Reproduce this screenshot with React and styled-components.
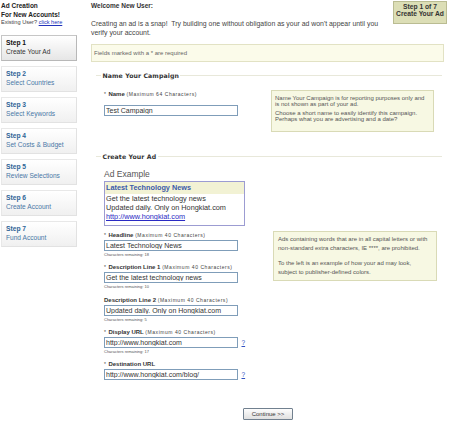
import React from "react";
import styled, { createGlobalStyle } from "styled-components";

const GlobalStyle = createGlobalStyle`
  html, body { margin: 0; padding: 0; background: #fff; }
  body { font-family: "Liberation Sans", Arial, sans-serif; color: #333; }
`;

const Page = styled.div`
  display: flex;
  align-items: flex-start;
  width: 450px;
  padding-left: 1px;
  box-sizing: border-box;
`;

const Sidebar = styled.aside`
  width: 76px;
  flex-shrink: 0;
  padding-top: 0.5px;
`;

const SideTitle = styled.div`
  font-weight: bold;
  font-size: 6.5px;
  line-height: 9px;
  color: #222;
`;

const SideNote = styled.div`
  font-size: 5.6px;
  line-height: 7.5px;
  color: #444;
  a { color: #2233bb; text-decoration: underline; }
`;

const StepList = styled.nav`
  display: flex;
  flex-direction: column;
  gap: 5px;
  margin-top: 9px;
`;

const StepCard = styled.div`
  height: 26px;
  box-sizing: border-box;
  padding: 2px 4px 0;
  border: 1px solid ${(p) => (p.$active ? "#c6c6c6" : "#e8e8e8")};
  border-right-color: ${(p) => (p.$active ? "#b8b8b8" : "#e2e2e2")};
  border-bottom-color: ${(p) => (p.$active ? "#b8b8b8" : "#e2e2e2")};
  background: linear-gradient(#ffffff, ${(p) => (p.$active ? "#e6e6e6" : "#f0f0f0")});
`;

const StepNum = styled.div`
  font-weight: bold;
  font-size: 6.7px;
  line-height: 9px;
  color: ${(p) => (p.$active ? "#111" : "#2f6496")};
`;

const StepName = styled.div`
  font-size: 6.6px;
  line-height: 10px;
  color: ${(p) => (p.$active ? "#333" : "#4a78a6")};
  white-space: nowrap;
`;

const Main = styled.main`
  width: 356px;
  margin-left: 14px;
`;

const Header = styled.header`
  display: flex;
  justify-content: space-between;
  align-items: flex-start;
`;

const Intro = styled.div`
  flex: 1;
  padding-top: 1px;
`;

const Welcome = styled.div`
  font-weight: bold;
  font-size: 6.5px;
  line-height: 9px;
  color: #333;
`;

const IntroText = styled.p`
  margin: 9px 0 0;
  font-size: 6.9px;
  line-height: 9px;
  color: #444;
  white-space: pre;
`;

const StepBadge = styled.div`
  width: 54px;
  height: 23px;
  box-sizing: border-box;
  margin-top: 1px;
  padding-top: 0.5px;
  background: #dcdeb6;
  border: 1px solid #babc92;
  text-align: center;
  font-weight: bold;
  font-size: 6.7px;
  line-height: 7.8px;
  color: #333;
`;

const Required = styled.div`
  margin: 7px 3px 0 0;
  height: 18px;
  box-sizing: border-box;
  padding-left: 2px;
  background: #fbfbea;
  border: 1px solid #e2e2c4;
  font-size: 6px;
  line-height: 16px;
  color: #666;
`;

const Section = styled.section`
  margin-top: ${(p) => p.$gap}px;
`;

const SectionTitle = styled.h2`
  margin: 0 5px 0 0;
  padding-left: 5px;
  display: flex;
  align-items: center;
  gap: 1.5px;
  height: 8px;
  font-family: "DejaVu Sans", Verdana, sans-serif;
  font-weight: bold;
  font-size: 6.2px;
  letter-spacing: 0.1px;
  color: #333;
  white-space: nowrap;
  &::before {
    content: "";
    width: 5px;
    border-top: 1px solid #e8e8da;
  }
  &::after {
    content: "";
    flex: 1;
    border-top: 1px solid #e8e8da;
  }
`;

const SectionBody = styled.div`
  padding-left: 13px;
`;

const Row = styled.div`
  display: flex;
  align-items: flex-start;
  margin-top: ${(p) => p.$gap}px;
`;

const FieldColumn = styled.div`
  width: ${(p) => p.$w}px;
  flex-shrink: 0;
`;

const FieldGroup = styled.div`
  & + & { margin-top: 5.3px; }
`;

const Label = styled.div`
  font-weight: bold;
  font-size: 6px;
  line-height: 8px;
  color: #333;
  margin-bottom: 1px;
  white-space: nowrap;
`;

const Hint = styled.span`
  font-weight: normal;
  font-size: 5px;
  letter-spacing: 0.55px;
  color: #444;
`;

const InputRow = styled.div`
  display: flex;
  align-items: center;
  gap: 3.5px;
`;

const TextInput = styled.input`
  width: 134px;
  height: 11px;
  box-sizing: border-box;
  margin: 0;
  padding: 0 0 0 1px;
  border: 1px solid #7f9db9;
  font-family: "Liberation Sans", Arial, sans-serif;
  font-size: 7px;
  line-height: 9px;
  color: #333;
  background: #fff;
  outline: none;
`;

const HelpLink = styled.a`
  font-size: 6.5px;
  color: #3050c0;
  text-decoration: underline;
`;

const Remaining = styled.div`
  font-size: 4px;
  line-height: 7px;
  color: #555;
`;

const InfoBox = styled.div`
  width: ${(p) => p.$w}px;
  height: ${(p) => p.$h}px;
  box-sizing: border-box;
  margin-top: ${(p) => p.$top || 0}px;
  padding: ${(p) => p.$pad};
  background: #f7f8e3;
  border: 1px solid #d9dab6;
  font-size: 6px;
  line-height: ${(p) => p.$lh}px;
  color: #555;
  white-space: nowrap;
  p { margin: 0; }
  p + p { margin-top: ${(p) => p.$pgap}px; }
`;

const AdExampleLabel = styled.div`
  margin-top: 8px;
  font-size: 8.5px;
  line-height: 10px;
  color: #555;
`;

const AdBox = styled.div`
  margin-top: 2px;
  width: 141px;
  height: 45px;
  box-sizing: border-box;
  border: 1px solid #9c9cd2;
`;

const AdTitle = styled.div`
  height: 12px;
  line-height: 11px;
  padding-left: 1px;
  background: #f2f2d4;
  font-weight: bold;
  font-size: 7.3px;
  color: #3a5aa8;
`;

const AdBody = styled.div`
  padding: 0.5px 1px;
  font-size: 7.3px;
  line-height: 9.2px;
  color: #333;
  a { color: #2a2ac4; text-decoration: underline; }
`;

const ButtonRow = styled.div`
  display: flex;
  justify-content: center;
  margin-top: 28px;
  padding-right: 2px;
`;

const Button = styled.button`
  width: 50px;
  height: 12px;
  padding: 0;
  border: 1px solid #71808f;
  border-radius: 1px;
  background: linear-gradient(#fdfdfd, #e0e0e0);
  font-family: "Liberation Sans", Arial, sans-serif;
  font-size: 6px;
  line-height: 10px;
  color: #333;
`;

const steps = [
  ["Step 1", "Create Your Ad"],
  ["Step 2", "Select Countries"],
  ["Step 3", "Select Keywords"],
  ["Step 4", "Set Costs & Budget"],
  ["Step 5", "Review Selections"],
  ["Step 6", "Create Account"],
  ["Step 7", "Fund Account"],
];

const fields = [
  { req: true, name: "Headline", hint: "(Maximum 40 Characters)", value: "Latest Technology News", left: 18 },
  { req: true, name: "Description Line 1", hint: "(Maximum 40 Characters)", value: "Get the latest technology news", left: 10 },
  { req: false, name: "Description Line 2", hint: "(Maximum 40 Characters)", value: "Updated daily. Only on Hongkiat.com", left: 5 },
  { req: true, name: "Display URL", hint: "(Maximum 40 Characters)", value: "http://www.hongkiat.com", left: 17, help: true },
  { req: true, name: "Destination URL", value: "http://www.hongkiat.com/blog/", help: true },
];

function Field({ req, name, hint, value, left, help }) {
  return (
    <FieldGroup>
      <Label>
        {req && <Hint>* </Hint>}
        {name} {hint && <Hint>{hint}</Hint>}
      </Label>
      <InputRow>
        <TextInput value={value} readOnly />
        {help && <HelpLink href="#">?</HelpLink>}
      </InputRow>
      {left !== undefined && <Remaining>Characters remaining: {left}</Remaining>}
    </FieldGroup>
  );
}

export default function App() {
  return (
    <>
      <GlobalStyle />
      <Page>
        <Sidebar>
          <SideTitle>Ad Creation</SideTitle>
          <SideTitle>For New Accounts!</SideTitle>
          <SideNote>
            Existing User? <a href="#">click here</a>
          </SideNote>
          <StepList>
            {steps.map(([n, label], i) => (
              <StepCard key={n} $active={i === 0}>
                <StepNum $active={i === 0}>{n}</StepNum>
                <StepName $active={i === 0}>{label}</StepName>
              </StepCard>
            ))}
          </StepList>
        </Sidebar>

        <Main>
          <Header>
            <Intro>
              <Welcome>Welcome New User:</Welcome>
              <IntroText>
                {"Creating an ad is a snap!  Try building one without obligation as your ad won't appear until you"}
                <br />
                {"verify your account."}
              </IntroText>
            </Intro>
            <StepBadge>
              Step 1 of 7
              <br />
              Create Your Ad
            </StepBadge>
          </Header>

          <Required>Fields marked with a * are required</Required>

          <Section $gap={9.5}>
            <SectionTitle>Name Your Campaign</SectionTitle>
            <SectionBody>
              <Row $gap={10}>
                <FieldColumn $w={167}>
                  <FieldGroup>
                    <Label>
                      <Hint>* </Hint>Name <Hint>(Maximum 64 Characters)</Hint>
                    </Label>
                    <TextInput value="Test Campaign" readOnly />
                  </FieldGroup>
                </FieldColumn>
                <InfoBox $w={163} $h={42} $top={0.5} $pad="4px 3px" $lh={6} $pgap={3.3}>
                  <p>
                    Name Your Campaign is for reporting purposes only and
                    <br />
                    is not shown as part of your ad.
                  </p>
                  <p>
                    Choose a short name to easily identify this campaign.
                    <br />
                    Perhaps what you are advertising and a date?
                  </p>
                </InfoBox>
              </Row>
            </SectionBody>
          </Section>

          <Section $gap={20.5}>
            <SectionTitle>Create Your Ad</SectionTitle>
            <SectionBody>
              <AdExampleLabel>Ad Example</AdExampleLabel>
              <AdBox>
                <AdTitle>Latest Technology News</AdTitle>
                <AdBody>
                  Get the latest technology news
                  <br />
                  Updated daily. Only on Hongkiat.com
                  <br />
                  <a href="#">http://www.hongkiat.com</a>
                </AdBody>
              </AdBox>
              <Row $gap={5.5}>
                <FieldColumn $w={169}>
                  {fields.map((f) => (
                    <Field key={f.name} {...f} />
                  ))}
                </FieldColumn>
                <InfoBox $w={164} $h={50} $pad="3px 4px" $lh={8.7} $pgap={7}>
                  <p>
                    Ads containing words that are in all capital letters or with
                    <br />
                    non-standard extra characters, IE ****, are prohibited.
                  </p>
                  <p>
                    To the left is an example of how your ad may look,
                    <br />
                    subject to publisher-defined colors.
                  </p>
                </InfoBox>
              </Row>
            </SectionBody>
          </Section>

          <ButtonRow>
            <Button type="button">Continue &gt;&gt;</Button>
          </ButtonRow>
        </Main>
      </Page>
    </>
  );
}
